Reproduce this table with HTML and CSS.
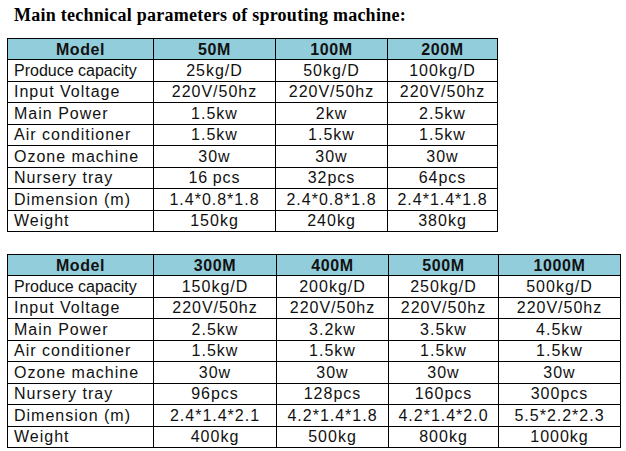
FILE: index.html
```html
<!DOCTYPE html>
<html>
<head>
<meta charset="utf-8">
<link rel="stylesheet" href="styles.css">
</head>
<body>
<div class="page">
  <h1 class="title">Main technical parameters of sprouting machine:</h1>
  <table class="spec spec-small">
    <colgroup><col class="c-label"><col class="c-a"><col class="c-b"><col class="c-c"></colgroup>
    <thead>
      <tr><th>Model</th><th>50M</th><th>100M</th><th>200M</th></tr>
    </thead>
    <tbody>
      <tr><td class="label tight">Produce capacity</td><td>25kg/D</td><td>50kg/D</td><td>100kg/D</td></tr>
      <tr><td class="label">Input Voltage</td><td>220V/50hz</td><td>220V/50hz</td><td>220V/50hz</td></tr>
      <tr><td class="label">Main Power</td><td>1.5kw</td><td>2kw</td><td>2.5kw</td></tr>
      <tr><td class="label">Air conditioner</td><td>1.5kw</td><td>1.5kw</td><td>1.5kw</td></tr>
      <tr><td class="label">Ozone machine</td><td>30w</td><td>30w</td><td>30w</td></tr>
      <tr><td class="label">Nursery tray</td><td class="narrow-space">16 pcs</td><td>32pcs</td><td>64pcs</td></tr>
      <tr><td class="label">Dimension (m)</td><td>1.4*0.8*1.8</td><td>2.4*0.8*1.8</td><td>2.4*1.4*1.8</td></tr>
      <tr><td class="label">Weight</td><td>150kg</td><td>240kg</td><td>380kg</td></tr>
    </tbody>
  </table>
  <table class="spec spec-large">
    <colgroup><col class="c-label"><col class="c-a2"><col class="c-b"><col class="c-c2"><col class="c-d"></colgroup>
    <thead>
      <tr><th>Model</th><th>300M</th><th>400M</th><th>500M</th><th>1000M</th></tr>
    </thead>
    <tbody>
      <tr><td class="label tight">Produce capacity</td><td>150kg/D</td><td>200kg/D</td><td>250kg/D</td><td>500kg/D</td></tr>
      <tr><td class="label">Input Voltage</td><td>220V/50hz</td><td>220V/50hz</td><td>220V/50hz</td><td>220V/50hz</td></tr>
      <tr><td class="label">Main Power</td><td>2.5kw</td><td>3.2kw</td><td>3.5kw</td><td>4.5kw</td></tr>
      <tr><td class="label">Air conditioner</td><td>1.5kw</td><td>1.5kw</td><td>1.5kw</td><td>1.5kw</td></tr>
      <tr><td class="label">Ozone machine</td><td>30w</td><td>30w</td><td>30w</td><td>30w</td></tr>
      <tr><td class="label">Nursery tray</td><td>96pcs</td><td>128pcs</td><td>160pcs</td><td>300pcs</td></tr>
      <tr><td class="label">Dimension (m)</td><td>2.4*1.4*2.1</td><td>4.2*1.4*1.8</td><td>4.2*1.4*2.0</td><td>5.5*2.2*2.3</td></tr>
      <tr><td class="label">Weight</td><td>400kg</td><td>500kg</td><td>800kg</td><td>1000kg</td></tr>
    </tbody>
  </table>
</div>
</body>
</html>
```

FILE: styles.css
```css
html, body {
  margin: 0;
  padding: 0;
  background: #ffffff;
}

.page {
  padding: 5px 0 0 7px;
}

.title {
  margin: 0 0 12px 7px;
  font-family: "Liberation Serif", "Times New Roman", serif;
  font-weight: bold;
  font-size: 18px;
  line-height: 21px;
  letter-spacing: 0.25px;
  color: #000;
}

.spec {
  border-collapse: collapse;
  table-layout: fixed;
  font-family: "Liberation Sans", Arial, sans-serif;
  font-size: 16px;
  color: #111;
  margin-bottom: 22px;
}

.spec-small { width: 490px; }
.spec-large { width: 613px; }

.c-label { width: 146px; }
.c-a { width: 122px; }
.c-a2 { width: 123px; }
.c-b { width: 112px; }
.c-c { width: 110px; }
.c-c2 { width: 110px; }
.c-d { width: 122px; }

.spec th, .spec td {
  border: 1px solid #000;
  padding: 0;
  text-align: center;
  white-space: nowrap;
  overflow: hidden;
}

.spec th {
  height: 20px;
  background: #92cddc;
  font-weight: bold;
  letter-spacing: 0.6px;
  line-height: 19px;
}

.spec td {
  height: 20.5px;
  line-height: 19px;
  letter-spacing: 1px;
}

.spec td.label {
  text-align: left;
  padding-left: 6px;
}

.spec td.tight { letter-spacing: 0; }
.spec td.narrow-space { word-spacing: -1px; }
```
